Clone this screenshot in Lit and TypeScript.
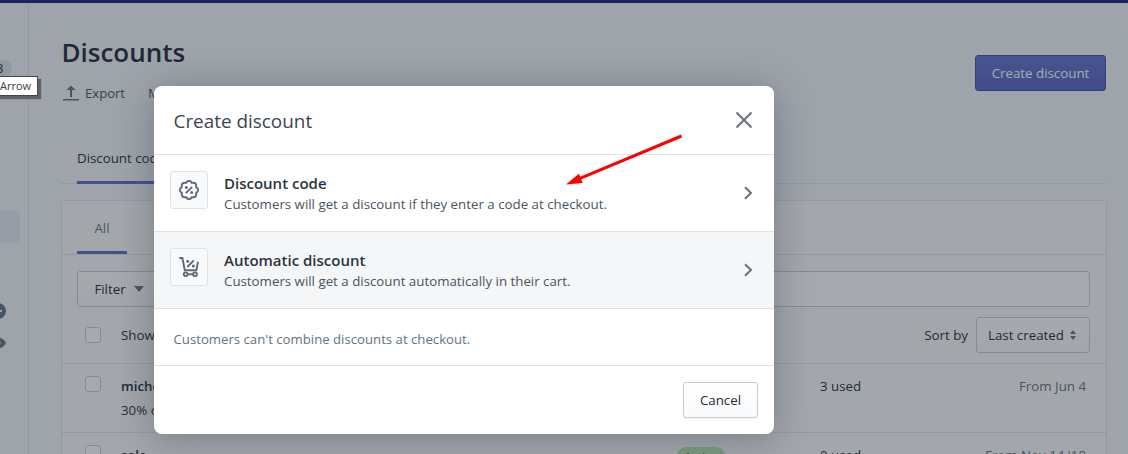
import { LitElement, html, css, svg } from "lit";
import { customElement } from "lit/decorators.js";

const scallop = (() => {
  const n = 8, cx = 10, cy = 10, r = 7.7, ctrl = 11.4;
  let d = "";
  for (let i = 0; i < n; i++) {
    const a0 = (i / n) * Math.PI * 2 - Math.PI / 8;
    const a1 = ((i + 1) / n) * Math.PI * 2 - Math.PI / 8;
    const m = (a0 + a1) / 2;
    const p = (a: number, R: number) => `${(cx + R * Math.cos(a)).toFixed(2)} ${(cy + R * Math.sin(a)).toFixed(2)}`;
    if (i === 0) d += `M${p(a0, r)}`;
    d += `Q${p(m, ctrl)} ${p(a1, r)}`;
  }
  return d + "Z";
})();

const chevron = html`<svg class="chev" viewBox="0 0 10 14"><path d="M2 1.2 8 7l-6 5.8" /></svg>`;

@customElement("app-root")
export class AppRoot extends LitElement {
  static styles = css`
    :host {
      display: block;
      position: relative;
      width: 1128px;
      height: 454px;
      overflow: hidden;
      background: #f4f6f8;
      font-family: "Open Sans", "Noto Sans", sans-serif;
      font-size: 13.3px;
      color: #212b36;
    }
    * { box-sizing: border-box; }
    .topbar { height: 3px; background: #1c2260; position: relative; z-index: 5; }
    .page { display: flex; height: 451px; overflow: hidden; }
    .sidebar {
      width: 29px; flex: none; border-right: 1px solid #dfe3e8; overflow: hidden;
      display: flex; flex-direction: column; align-items: flex-end;
    }
    .side-badge {
      flex: none; width: 24px; height: 17px; margin: 57px 16px 0 0; border-radius: 9px;
      background: #dfe3e8; font-size: 12px; line-height: 17px; text-align: center;
    }
    .side-active { flex: none; width: 28px; height: 32px; margin: 134px 8px 0 0; border-radius: 3px; background: #e6e9f2; }
    .side-icon { flex: none; width: 16px; height: 16px; margin-right: 22px; fill: #637381; }
    .i1 { margin-top: 60px; }
    .i2 { margin-top: 16px; }
    .main { flex: 1; min-width: 0; padding: 0 21px 0 32px; }
    .head { display: flex; justify-content: space-between; align-items: flex-start; }
    h1 { margin: 33px 0 0 0.5px; font-size: 26px; line-height: 32px; font-weight: 600; }
    .actions { display: flex; align-items: center; height: 26px; margin-top: 12px; color: #454f5b; white-space: nowrap; }
    .export { display: flex; align-items: center; gap: 6px; margin: 0 23px 0 2px; font-size: 13.1px; }
    .export svg { width: 16px; height: 16px; fill: #637381; }
    .primary {
      width: 131px; height: 36px; margin: 52px 1px 0 0; border-radius: 3px; border: 1px solid #3f4eae;
      background: linear-gradient(#6371c7, #5563c1); color: #fff; display: flex; align-items: center; justify-content: center;
    }
    .tabs { display: flex; height: 50px; margin-top: 28px; border-bottom: 1px solid #dfe3e8; padding-left: 16px; margin-right: 1px; }
    .tab { width: 200px; height: 50px; border-bottom: 3px solid #5c6ac4; display: flex; align-items: center; color: #212b36; }
    .card { margin-top: 16px; background: #fbfbfb; border: 1px solid #dfe3e8; border-radius: 3px; height: 300px; }
    .ctabs { height: 54px; border-bottom: 1px solid #dfe3e8; padding-left: 15px; }
    .ctab { width: 50px; height: 53px; padding-top: 4px; border-bottom: 3px solid #5c6ac4; display: flex; align-items: center; justify-content: center; color: #637381; }
    .filter { display: flex; height: 36px; margin: 16px 16px 0 15px; }
    .filter-btn, .search { border: 1px solid #c4cdd5; height: 36px; background: linear-gradient(#fff, #f9fafb); }
    .filter-btn { width: 84px; display: flex; align-items: center; justify-content: center; gap: 8px; border-radius: 3px 0 0 3px; }
    .caret { width: 0; height: 0; border: 5.5px solid transparent; border-top: 6px solid #637381; border-bottom: 0; }
    .search { flex: 1; border-left: 0; border-radius: 0 3px 3px 0; background: #fff; }
    .sort { height: 57px; border-bottom: 1px solid #dfe3e8; display: flex; align-items: center; padding: 0 16px 1px 23px; }
    .box { width: 16px; height: 16px; flex: none; border: 1px solid #c4cdd5; border-radius: 3px; background: #fff; }
    .showing { margin-left: 20px; flex: 1; }
    .sort-label { margin-right: 8px; color: #212b36; }
    .select {
      width: 114px; height: 36px; border: 1px solid #c4cdd5; border-radius: 3px; background: linear-gradient(#fff, #f9fafb);
      display: flex; align-items: center; justify-content: space-between; padding: 0 13px 0 11px;
    }
    .updown { display: flex; flex-direction: column; gap: 2px; }
    .updown i { display: block; width: 0; height: 0; border: 3px solid transparent; }
    .updown i:first-child { border-top: 0; border-bottom: 4px solid #637381; }
    .updown i:last-child { border-bottom: 0; border-top: 4px solid #637381; }
    .row {
      height: 69px; border-bottom: 1px solid #dfe3e8; padding: 12px 20px 0 23px;
      display: grid; grid-template-columns: 16px 719px 1fr auto; column-gap: 0; align-items: start;
    }
    .row > .info { padding-left: 20px; position: relative; line-height: 20px; }
    .name { font-weight: 600; margin-bottom: 4px; }
    .pill {
      position: absolute; left: 575px; top: 2px; width: 50px; height: 22px; border-radius: 11px; background: #bbe5b3;
      font-size: 12px; line-height: 22px; text-align: center; color: #414f3e;
    }
    .used { line-height: 20px; }
    .date { line-height: 20px; color: #637381; text-align: right; }
    .scrim { position: absolute; inset: 3px 0 0 0; background: rgba(33, 43, 54, 0.4); }
    .tooltip {
      position: absolute; left: -6px; top: 76px; width: 44px; height: 20px; padding-left: 5px;
      background: #fff; border: 1px solid #444; box-shadow: 3px 3px 1px rgba(70, 70, 70, 0.7);
      font-size: 11px; line-height: 18px; color: #3a4048;
    }
    .modal {
      position: absolute; left: 154px; top: 86px; width: 620px; height: 348px; background: #fff; border-radius: 8px;
      box-shadow: 0 4px 36px rgba(33, 43, 54, 0.35); display: flex; flex-direction: column; overflow: hidden;
    }
    .m-head { height: 69px; flex: none; border-bottom: 1px solid #dfe3e8; display: flex; align-items: center; justify-content: space-between; padding: 2px 20px 0 19.5px; }
    .m-title { font-size: 18.9px; color: #3c4650; }
    .close { width: 20px; height: 20px; margin-top: -2px; stroke: #637381; stroke-width: 2; fill: none; }
    .opt { height: 77px; flex: none; border-bottom: 1px solid #dfe3e8; display: flex; align-items: center; padding: 0 21px 0 16px; }
    .opt.alt { background: #f4f6f8; }
    .ibox {
      width: 38px; height: 38px; flex: none; border: 1px solid #dfe3e8; border-radius: 3px; background: #f9fafb;
      display: flex; align-items: center; justify-content: center; margin: 0 16px 6px 0;
    }
    .ibox svg { width: 20px; height: 20px; fill: none; stroke: #5c6b7a; stroke-width: 1.9; }
    .ibox .dot { fill: #5c6b7a; stroke: none; }
    .opt-text { flex: 1; }
    .opt-title { font-size: 15px; font-weight: 600; line-height: 20px; color: #2b3540; }
    .opt-sub { font-size: 13.3px; line-height: 20px; color: #4a5560; margin-top: 1px; }
    .chev { width: 10px; height: 14px; fill: none; stroke: #637381; stroke-width: 2; }
    .note { height: 57px; flex: none; border-bottom: 1px solid #dfe3e8; display: flex; align-items: center; padding: 4px 19.5px 0; color: #637381; font-size: 13.2px; }
    .foot { flex: 1; display: flex; justify-content: flex-end; align-items: flex-start; padding: 16px 16px 0; }
    .cancel {
      width: 75px; height: 36px; border: 1px solid #c4cdd5; border-radius: 3px; background: linear-gradient(#fff, #f9fafb);
      box-shadow: 0 1px 0 rgba(22, 29, 37, 0.05); display: flex; align-items: center; justify-content: center;
    }
    .arrow { position: absolute; left: 0; top: 0; width: 1128px; height: 454px; pointer-events: none; }
  `;

  render() {
    return html`
      <div class="topbar"></div>
      <div class="page">
        <div class="sidebar">
          <div class="side-badge">3</div>
          <div class="side-active"></div>
          <svg class="side-icon i1" viewBox="0 0 16 16"><path fill-rule="evenodd" d="M8 0a8 8 0 1 0 0 16A8 8 0 0 0 8 0Zm-4 7h8v2H4z" /></svg>
          <svg class="side-icon i2" viewBox="0 0 16 16"><path fill-rule="evenodd" d="M8 2.500C4 2.500 1 6 0 8c1 2 4 5.500 8 5.500S15 10 16 8c-1-2-4-5.500-8-5.500Zm0 3a2.500 2.500 0 1 1 0 5 2.500 2.500 0 0 1 0-5Z" /></svg>
        </div>
        <div class="main">
          <div class="head">
            <div>
              <h1>Discounts</h1>
              <div class="actions">
                <span class="export">
                  <svg viewBox="0 0 16 16"><path d="M8 .5 12.500 5H9v7H7V5H3.500zM0 14h16v1.500H0z" /></svg>
                  Export
                </span>
                <span>More actions</span>
              </div>
            </div>
            <div class="primary">Create discount</div>
          </div>
          <div class="tabs"><div class="tab">Discount codes</div></div>
          <div class="card">
            <div class="ctabs"><div class="ctab">All</div></div>
            <div class="filter">
              <div class="filter-btn">Filter <span class="caret"></span></div>
              <div class="search"></div>
            </div>
            <div class="sort">
              <span class="box"></span>
              <span class="showing">Showing</span>
              <span class="sort-label">Sort by</span>
              <div class="select">Last created <span class="updown"><i></i><i></i></span></div>
            </div>
            <div class="row">
              <span class="box"></span>
              <div class="info"><div class="name">michelle</div><div>30% off</div></div>
              <div class="used">3 used</div>
              <div class="date">From Jun 4</div>
            </div>
            <div class="row">
              <span class="box"></span>
              <div class="info"><div class="name">sale</div><span class="pill">Active</span></div>
              <div class="used">0 used</div>
              <div class="date">From Nov 14 '18</div>
            </div>
          </div>
        </div>
      </div>
      <div class="scrim"></div>
      <div class="tooltip">Arrow</div>
      <div class="modal">
        <div class="m-head">
          <span class="m-title">Create discount</span>
          <svg class="close" viewBox="0 0 20 20"><path d="M2.500 2.500l15 15M17.500 2.500l-15 15" /></svg>
        </div>
        <div class="opt">
          <div class="ibox">
            <svg viewBox="0 0 20 20">
              <path d=${scallop} />
              <path d="M6.800 13.200 13.200 6.800" />
              <circle class="dot" cx="7.300" cy="7.500" r="1.500" />
              <circle class="dot" cx="12.700" cy="12.500" r="1.500" />
            </svg>
          </div>
          <div class="opt-text">
            <div class="opt-title">Discount code</div>
            <div class="opt-sub">Customers will get a discount if they enter a code at checkout.</div>
          </div>
          ${chevron}
        </div>
        <div class="opt alt">
          <div class="ibox">
            <svg viewBox="0 0 20 20">
              <path d="M.3 1H3.400L5.800 13.200H17.400L19 4.700" />
              <path d="M8.300 10 14.800 3.400" />
              <circle class="dot" cx="8.700" cy="4.300" r="1.500" />
              <circle class="dot" cx="14.400" cy="9" r="1.500" />
              <circle cx="6.700" cy="17.300" r="1.900" />
              <circle cx="16" cy="17.300" r="1.900" />
              <path d="M8.600 17.300H14.100" />
            </svg>
          </div>
          <div class="opt-text">
            <div class="opt-title">Automatic discount</div>
            <div class="opt-sub">Customers will get a discount automatically in their cart.</div>
          </div>
          ${chevron}
        </div>
        <div class="note">Customers can't combine discounts at checkout.</div>
        <div class="foot"><div class="cancel">Cancel</div></div>
      </div>
      <svg class="arrow" viewBox="0 0 1128 454">
        ${svg`<path d="M681.500 136 580 178.300" stroke="#f00" stroke-width="3" fill="none" />
        <path d="M566 184.500 578.900 173.700 582.700 182.900Z" fill="#f00" />`}
      </svg>
    `;
  }
}
